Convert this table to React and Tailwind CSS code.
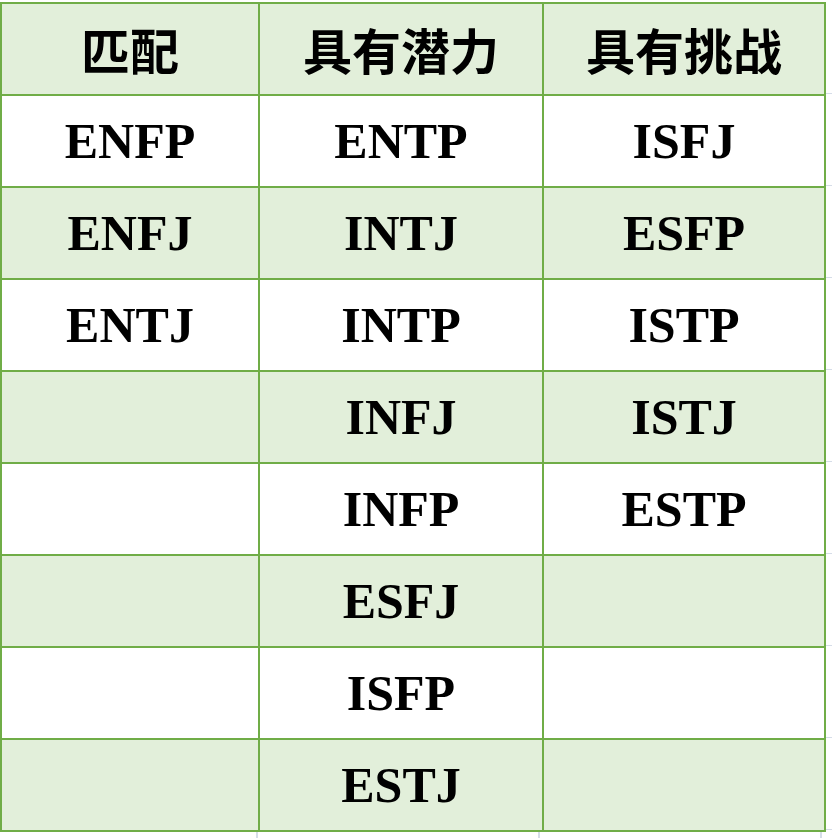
import React from 'react';

const rows = [
  ['ENFP', 'ENTP', 'ISFJ'],
  ['ENFJ', 'INTJ', 'ESFP'],
  ['ENTJ', 'INTP', 'ISTP'],
  ['', 'INFJ', 'ISTJ'],
  ['', 'INFP', 'ESTP'],
  ['', 'ESFJ', ''],
  ['', 'ISFP', ''],
  ['', 'ESTJ', ''],
];

const headers = ['匹配', '具有潜力', '具有挑战'];

const App = () => {
  return (
    <div className="bg-white min-h-screen w-[832px] h-[838px] overflow-hidden">
      <div className="flex pt-[2px]">
        {/* 表格 */}
        <div className="grid grid-cols-[256px_282px_280px] gap-[2px] p-[2px] bg-[#70ad47] w-fit">
          {headers.map((h) => (
            <div
              key={h}
              className="h-[90px] bg-[#e2efda] flex items-center justify-center text-black text-[49px] font-bold"
              style={{ fontFamily: '"Noto Sans CJK SC", sans-serif' }}
            >
              {h}
            </div>
          ))}
          {rows.map((r, i) =>
            r.map((c, j) => (
              <div
                key={i + '-' + j}
                className={`h-[90px] flex items-center justify-center text-black text-[50px] font-bold ${
                  i % 2 === 1 ? 'bg-[#e2efda]' : 'bg-white'
                }`}
                style={{ fontFamily: '"Liberation Serif", serif' }}
              >
                {c}
              </div>
            ))
          )}
        </div>

        {/* 右侧网格线 */}
        <div className="flex flex-col flex-1">
          {Array.from({ length: 9 }).map((_, i) => (
            <div key={i} className="h-[92px] border-b border-[#d6dde8]" />
          ))}
        </div>
      </div>
      <div className="flex h-[6px]">
        <div className="w-[256px] ml-[2px] border-r-2 border-[#d6dde8]" />
        <div className="w-[282px] border-r-2 border-[#d6dde8]" />
        <div className="w-[282px] border-r-2 border-[#d6dde8]" />
      </div>
    </div>
  );
};

export default App;
